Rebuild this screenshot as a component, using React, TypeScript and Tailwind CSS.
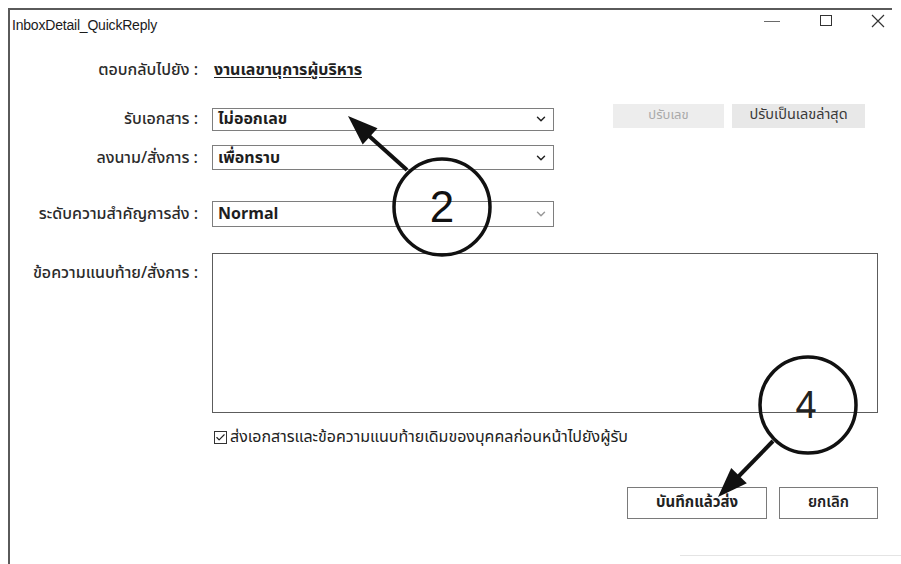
import { ChevronDown, Check } from 'lucide-react';

const thai = "font-['Leelawadee_UI','Tahoma','Noto_Sans_Thai','Noto_Sans',sans-serif]";

// label column on the left of each form row
const Label = ({ children }: { children: React.ReactNode }) => (
  <div className="w-[190px] shrink-0 text-right text-[16px] leading-[20px] font-medium text-[#2b2b2b] pr-[2px]">
    {children}
  </div>
);

const Select = ({ value, faded }: { value: string; faded?: boolean }) => (
  <div className="w-[342px] h-full border border-[#7e7e7e] bg-white flex items-center justify-between pl-[5px] pr-[5px]">
    <span className="text-[16px] leading-[20px] font-bold text-[#1e1e1e]">{value}</span>
    <ChevronDown size={14} strokeWidth={2.5} className={faded ? 'text-[#9a9a9a]' : 'text-[#222]'} />
  </div>
);

export default function App() {
  return (
    <div className={`relative w-[901px] h-[564px] bg-white overflow-hidden ${thai}`}>
      <div className="absolute left-[8px] top-[8px] w-[884px] h-[600px] border-l-2 border-t-2 border-[#5a5a5a]">
        {/* title bar */}
        <div className="h-[30px] flex items-center justify-between pl-[2px]">
          <span className="text-[14px] text-[#1b1b1b] font-['Liberation_Sans',sans-serif] tracking-[-0.2px]">
            InboxDetail_QuickReply
          </span>
          <div className="flex items-center h-full -mt-[9px]">
            <div className="w-[16px] h-[1px] bg-[#6a6a6a] mr-[40px] mt-[2px]" />
            <div className="w-[12px] h-[11px] border border-[#333] mr-[39px]" />
            <svg width="14" height="14" viewBox="0 0 14 14" className="mr-[7px]">
              <path d="M1 1 L13 13 M13 1 L1 13" stroke="#333" strokeWidth="1.2" />
            </svg>
          </div>
        </div>

        <div className="flex flex-col">
          {/* reply to */}
          <div className="mt-[18px] h-[24px] flex items-center">
            <Label>ตอบกลับไปยัง :</Label>
            <span className="ml-[14px] text-[16px] leading-[20px] font-bold underline underline-offset-2 text-[#222]">
              งานเลขานุการผู้บริหาร
            </span>
          </div>

          {/* receive doc */}
          <div className="mt-[25px] h-[24px] flex items-center">
            <Label>รับเอกสาร :</Label>
            <div className="ml-[12px] h-[23px]">
              <Select value="ไม่ออกเลข" />
            </div>
            <button className="ml-[59px] w-[111px] h-[24px] -mt-[6px] bg-[#ededed] text-[13px] text-[#a9a9a9]">
              ปรับเลข
            </button>
            <button className="ml-[8px] w-[133px] h-[24px] -mt-[6px] bg-[#e8e8e8] text-[14.5px] text-[#3a3a3a]">
              ปรับเป็นเลขล่าสุด
            </button>
          </div>

          {/* sign / order */}
          <div className="mt-[14px] h-[25px] flex items-center">
            <Label>ลงนาม/สั่งการ :</Label>
            <div className="ml-[12px] h-[25px]">
              <Select value="เพื่อทราบ" />
            </div>
          </div>

          {/* priority */}
          <div className="mt-[31px] h-[26px] flex items-center">
            <Label>ระดับความสำคัญการส่ง :</Label>
            <div className="ml-[12px] h-[26px]">
              <Select value="Normal" faded />
            </div>
          </div>

          {/* note */}
          <div className="mt-[26px] flex items-start">
            <div className="pt-[10px]">
              <Label>ข้อความแนบท้าย/สั่งการ :</Label>
            </div>
            <div className="ml-[12px] w-[666px] h-[160px] border border-[#5c5c5c] bg-white" />
          </div>

          {/* forward previous notes */}
          <div className="mt-[16px] h-[16px] flex items-center pl-[204px]">
            <div className="w-[13px] h-[13px] border border-[#333] flex items-center justify-center">
              <Check size={11} strokeWidth={2.5} className="text-[#222]" />
            </div>
            <span className="ml-[3px] text-[16px] leading-[20px] text-[#222]">
              ส่งเอกสารและข้อความแนบท้ายเดิมของบุคคลก่อนหน้าไปยังผู้รับ
            </span>
          </div>

          {/* actions */}
          <div className="mt-[42px] flex justify-end w-[868px] gap-[12px]">
            <button className="w-[140px] h-[32px] border border-[#7a7a7a] bg-white text-[15px] font-bold text-[#222]">
              บันทึกแล้วส่ง
            </button>
            <button className="w-[99px] h-[32px] border border-[#7a7a7a] bg-white text-[15px] font-semibold text-[#222]">
              ยกเลิก
            </button>
          </div>
        </div>
      </div>

      {/* faint lower edge */}
      <div className="absolute left-[680px] top-[555px] w-[221px] h-[1px] bg-[#e4e4e4]" />

      {/* step markers */}
      <svg className="absolute inset-0 pointer-events-none" width="901" height="564">
        <circle cx="442" cy="207" r="48" fill="none" stroke="#111" strokeWidth="3.5" />
        <line x1="407" y1="170" x2="368" y2="135" stroke="#111" strokeWidth="4" />
        <polygon points="348,116 377.5,128.2 362.7,144.4" fill="#111" />
        <text x="442" y="222" textAnchor="middle" fontSize="44" fontFamily="Liberation Sans, sans-serif" fill="#111">
          2
        </text>

        <circle cx="808" cy="405" r="48" fill="none" stroke="#111" strokeWidth="3.5" />
        <line x1="773" y1="441" x2="738" y2="477" stroke="#111" strokeWidth="4" />
        <polygon points="718,497 746.8,483.3 731.2,467.9" fill="#111" />
        <text x="806" y="418" textAnchor="middle" fontSize="38" fontFamily="Liberation Sans, sans-serif" fill="#222">
          4
        </text>
      </svg>
    </div>
  );
}
